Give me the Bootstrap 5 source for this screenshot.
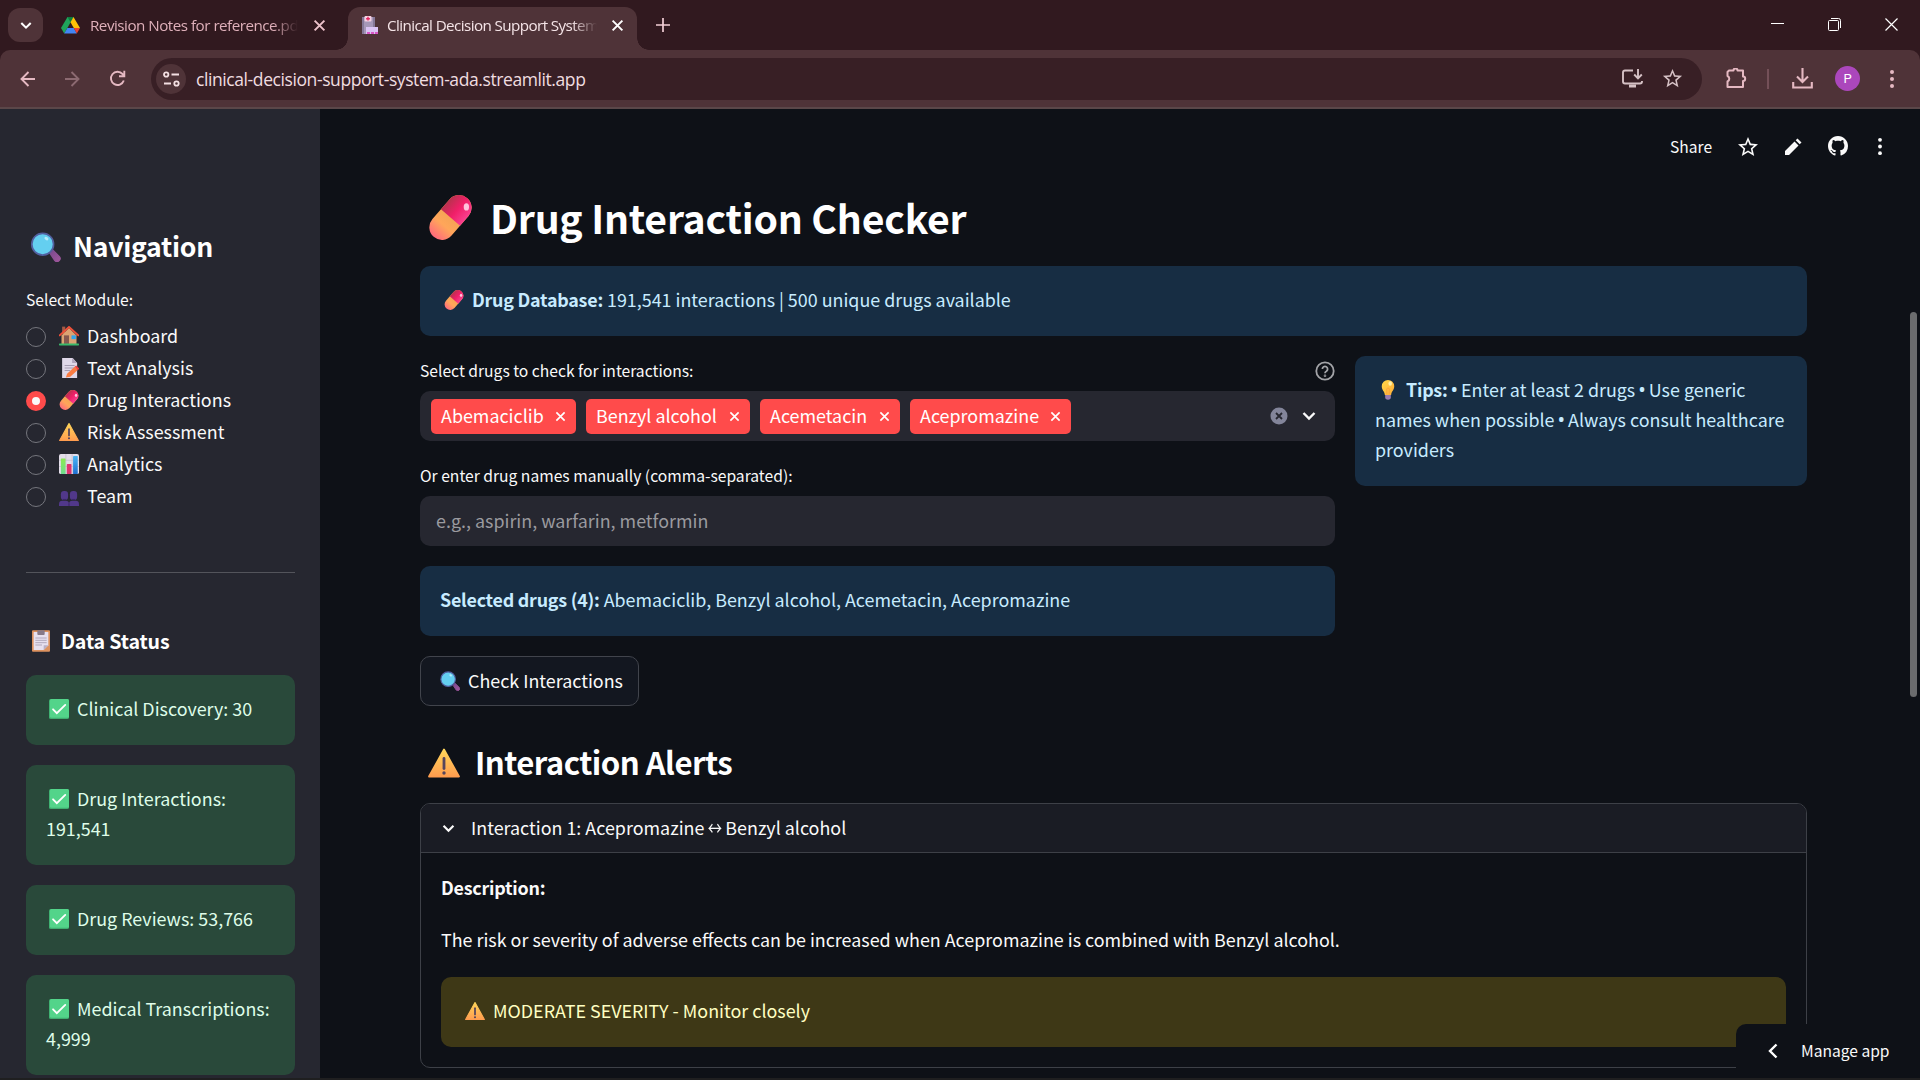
<!DOCTYPE html>
<html lang="en" data-bs-theme="dark">
<head>
<meta charset="utf-8">
<title>Clinical Decision Support System</title>
<link href="https://cdn.jsdelivr.net/npm/bootstrap@5.3.0/dist/css/bootstrap.min.css" rel="stylesheet">
<style>
body{height:1080px;overflow:hidden;background:#0e1117;color:#fafafa;font-family:"Noto Sans CJK SC","Noto Sans",sans-serif;font-size:17.9px;line-height:30px}
svg{display:block;flex:none}
b{letter-spacing:-.24px}
svg.emo{display:inline-block;width:20px;height:20px;vertical-align:-3px;margin:0 8px 0 3px}
.win{font-family:"Open Sans","Noto Sans",sans-serif}
.tabstrip{height:50px;background:#31191f}
.tabsearch{width:35px;height:34px;border-radius:12px;background:#4f3338;margin:8px 0 0 8px}
.tab-idle{width:279px;margin-left:18px}
.tab-live{width:289px;height:43px;margin:7px 0 0 8px;padding-bottom:7px;background:#4f3338;border-radius:12px 12px 0 0;position:relative}
.tab-live::before,.tab-live::after{content:"";position:absolute;bottom:0;width:12px;height:12px}
.tab-live::before{left:-12px;background:radial-gradient(circle at 0 0,transparent 11.5px,#4f3338 12px)}
.tab-live::after{right:-12px;background:radial-gradient(circle at 100% 0,transparent 11.5px,#4f3338 12px)}
.tab-txt{font-size:15.2px;line-height:24px;letter-spacing:-.5px;white-space:nowrap;overflow:hidden;-webkit-mask-image:linear-gradient(90deg,#000 88%,transparent)}
.toolbar{height:59px;background:#4f3338;border-bottom:2px solid #5b4749;border-radius:10px 10px 0 0;color:#e5b9c2}
.omni{width:1551px;height:42px;border-radius:21px;background:#381f25;color:#d5c1c5}
.site{width:30px;height:30px;border-radius:50%;background:#4f3338}
.url{font-size:17.5px;color:#f0dde0;letter-spacing:-.41px}
.avatar{width:25px;height:25px;border-radius:50%;background:#ab47bc;color:#fff;font:13px/25px Roboto,sans-serif;text-align:center}
.viewport{height:969px;overflow:hidden;position:relative}
.side{width:320px;height:969px;background:#262730;padding:119px 25px 0 26px}
.side h2{font-size:26.6px;line-height:36px;font-weight:700;letter-spacing:-.25px;margin:0}
.side h3{font-size:19.6px;line-height:24px;font-weight:700;letter-spacing:-.15px;margin:0}
.lbl{font-size:15.65px;line-height:24px}
.opt{height:32px}
.opt-txt{margin-top:-5px}
.dot{width:20px;height:20px;border-radius:50%;border:1px solid #75767d;margin-right:10px}
.dot.on{border:6.5px solid #ff4b4b;background:#fafafa}
.rule{border-top:1px solid #53545b;width:269px}
.note{border-radius:10px;padding:18px 20px 22px}
.ok{background:#29493a;color:#dffde9}
.info{background:#172d43;color:#c7ebff}
.warn{background:#3e3816;color:#ffffc2}
.main{width:1387px;margin-left:100px;padding-top:83px}
.main h1{font-size:39.2px;line-height:50px;font-weight:700;letter-spacing:-.22px;margin:0}
.main h2{font-size:31.2px;line-height:44px;font-weight:700;letter-spacing:-.55px;margin:0}
.field{height:50px;border-radius:10px;background:#262730}
.tagx{height:35px;border-radius:5px;background:#ff4b4b;color:#fff;padding:0 10px}
.tagx span{margin-top:-2px}
.ph{color:#9a9a9f}
.bul{font-family:"Noto Sans",sans-serif;font-size:20px;line-height:1;margin:0 -1px}
.arrow{display:inline-block;margin:0 -2.5px;transform:scaleX(.8)}
.btn-check2{width:219px;height:50px;border:1px solid #41444c;border-radius:10px;background:#131720;color:#fafafa;font-size:17.9px;line-height:30px;padding:0 0 3px 16px}
.expander{height:265px;border:1px solid #3d4047;border-radius:10px;overflow:hidden}
.exp-head{height:49px;background:#1a1c24;border-bottom:1px solid #3d4047}
.apptools{position:absolute;top:26px;left:1670px;width:230px;height:24px;font-size:15.6px}
.manage{position:absolute;left:1736px;top:915px;width:184px;height:54px;background:#0e1117;border-radius:10px 0 0 0;font-size:15.6px}
.thumb{position:absolute;left:1910px;top:203px;width:7px;height:385px;border-radius:4px;background:#6b6c6e}
.base{height:2px;background:#1f1f20}
</style>
<script src="https://cdn.jsdelivr.net/npm/bootstrap@5.3.0/dist/js/bootstrap.bundle.min.js"></script>
</head>
<body>
<svg width="0" height="0" class="position-absolute">
<defs>
<linearGradient id="gp" x1="0" y1="0" x2="1" y2="0"><stop offset="0" stop-color="#b8324e"/><stop offset=".5" stop-color="#f01f68"/><stop offset="1" stop-color="#f9408f"/></linearGradient>
<linearGradient id="go" x1="0" y1="0" x2="0" y2="1"><stop offset="0" stop-color="#e0a04a"/><stop offset=".7" stop-color="#ffa65a"/><stop offset="1" stop-color="#ff6a7c"/></linearGradient>
<linearGradient id="gw" x1="0" y1="0" x2="0" y2="1"><stop offset="0" stop-color="#ffd65a"/><stop offset="1" stop-color="#ff9d4f"/></linearGradient>
<linearGradient id="gh" x1="0" y1="0" x2="1" y2="1"><stop offset="0" stop-color="#7a4a8e"/><stop offset="1" stop-color="#a0579c"/></linearGradient>
<linearGradient id="gg" x1="0" y1="0" x2="0" y2="1"><stop offset="0" stop-color="#8bea4f"/><stop offset="1" stop-color="#6fdc90"/></linearGradient>
<linearGradient id="gb" x1="0" y1="0" x2="0" y2="1"><stop offset="0" stop-color="#4ab6f5"/><stop offset="1" stop-color="#1f6fd0"/></linearGradient>
<linearGradient id="gl" x1="0" y1="0" x2="1" y2="1"><stop offset="0" stop-color="#ffd849"/><stop offset="1" stop-color="#ffac38"/></linearGradient>
</defs>
<symbol id="pill" viewBox="0 0 32 32"><g transform="rotate(41 16 16)"><rect x="7" y="-2.200" width="18" height="36.400" rx="9" fill="url(#go)"/><path d="M7 16V6.800a9 9 0 0 1 18 0V16z" fill="url(#gp)"/></g><ellipse cx="27.300" cy="8.500" rx="1.900" ry="2.600" fill="#ffc4dd"/></symbol>
<symbol id="lens" viewBox="0 0 32 32"><path d="M21 23l3-3.500 6.500 6.500a3 3 0 0 1-4.500 4.500z" fill="url(#gh)" stroke="url(#gh)" stroke-width="1.500"/><circle cx="13" cy="13" r="11.600" fill="#64cff0" stroke="#5260a0" stroke-width="1.800"/><ellipse cx="17" cy="7" rx="2.300" ry="1.600" transform="rotate(35 17 7)" fill="#b5ecfa"/></symbol>
<symbol id="alert" viewBox="0 0 32 32"><path d="M16 2.500L31 29.500H1z" fill="url(#gw)" stroke="url(#gw)" stroke-width="1.800" stroke-linejoin="round"/><path d="M16 11.500v10" stroke="#56455c" stroke-width="2.800" stroke-linecap="round"/><circle cx="16" cy="26" r="1.700" fill="#56455c"/></symbol>
<symbol id="tick" viewBox="0 0 32 32"><rect width="32" height="32" rx="3" fill="#3fae70"/><rect x="1.500" width="30.500" height="30" rx="2.500" fill="#53d48a"/><path d="M6.500 16.500l6 6L26 9.500" fill="none" stroke="#fff" stroke-width="3" stroke-linecap="round"/></symbol>
<symbol id="house" viewBox="0 0 32 32"><rect x="5" y="1" width="5" height="12" fill="#a85a45"/><path d="M4 15L16 3l12 12v14H4z" fill="#dba372"/><rect x="8" y="15" width="8" height="14" fill="#85584e"/><rect x="20" y="15" width="7" height="6" fill="#31a5ee"/><path d="M1 15L16 1.500 31 15" fill="none" stroke="#ee5038" stroke-width="3" stroke-linecap="round"/><rect y="28" width="32" height="3" rx="1" fill="#39b96b"/></symbol>
<symbol id="memo" viewBox="0 0 32 32"><path d="M5 0h17l7 8v24H5z" fill="#dfd8e8"/><path d="M21 0l8 8h-8z" fill="#b0a5bc"/><path d="M9 12h16M9 16h15M9 20h9" stroke="#9c94aa" stroke-width="1.400"/><path d="M11 31l2-6L25 14l5 5-12 11z" fill="#fa7c42"/><path d="M25 14l2.500-2 5 5-2.500 2.400z" fill="#f0413f"/></symbol>
<symbol id="chart" viewBox="0 0 32 32"><rect width="32" height="32" rx="3" fill="#e3dde9"/><path d="M0 10h32M0 20h32M11 0v32M21 0v32" stroke="#bfb6ca" stroke-width="1"/><rect x="3" y="7" width="7.500" height="25" rx="1" fill="url(#gg)"/><rect x="12.500" y="16" width="7.500" height="16" rx="1" fill="#e0336f"/><rect x="22.500" y="3" width="7.500" height="29" rx="1" fill="url(#gb)"/></symbol>
<symbol id="team" viewBox="0 0 32 32"><g fill="#51388a"><rect x="3" y="8" width="11.500" height="14.500" rx="5"/><path d="M0 32v-3c0-4 2-5.500 5-5.500h6c3 0 5 1.500 5 5.500v3z"/><rect x="17.500" y="8" width="11.500" height="14.500" rx="5"/><path d="M16 32v-3c0-4 2-5.500 5-5.500h6c3 0 5 1.500 5 5.500v3z"/></g><path d="M16 32v-4M6 21.500h6M20 21.500h6" stroke="#382361" stroke-width="1.500"/></symbol>
<symbol id="clip" viewBox="0 0 27 32"><rect width="27" height="32" rx="1.500" fill="#dd925f"/><path d="M2.500 2.500h22v20l-7 7h-15z" fill="#e7e0ef"/><path d="M17.500 29.500l7-7h-7z" fill="#b9afc5"/><rect x="8" width="11" height="7" rx="1.500" fill="#877988"/><path d="M5 11.500h17M5 15h17M5 18.500h17M5 22h10" stroke="#a49bb0" stroke-width="1.200"/></symbol>
<symbol id="bulb" viewBox="0 0 22 32"><path d="M6.500 22h9v7q-4.500 5-9 0z" fill="#9a7bb0"/><path d="M11 0a10 10 0 0 1 10 10c0 6-4.500 8-5 14H6C5.500 18 1 16 1 10A10 10 0 0 1 11 0z" fill="url(#gl)"/><ellipse cx="14.500" cy="5.500" rx="2.800" ry="3.500" fill="#fff0a8"/><path d="M9 23v-9q2-3 4 0v9" stroke="#fb933a" fill="none"/></symbol>
<symbol id="cross" viewBox="0 0 12 12"><path d="M1.500 1.500l9 9m0-9l-9 9" stroke="currentColor" stroke-width="1.800" fill="none"/></symbol>
<symbol id="down" viewBox="0 0 14 10"><path d="M1.500 2L7 7.500 12.500 2" stroke="currentColor" stroke-width="2.400" fill="none"/></symbol>
<symbol id="star" viewBox="0 0 24 24"><path fill="currentColor" d="M22 9.240l-7.190-.62L12 2 9.190 8.630 2 9.240l5.460 4.730L5.820 21 12 17.270 18.180 21l-1.630-7.030zM12 15.400l-3.760 2.270 1-4.280-3.320-2.880 4.380-.38L12 6.100l1.710 4.040 4.380.38-3.320 2.880 1 4.280z"/></symbol>
<symbol id="dots" viewBox="0 0 6 20"><g fill="currentColor"><circle cx="3" cy="3" r="2"/><circle cx="3" cy="10" r="2"/><circle cx="3" cy="17" r="2"/></g></symbol>
</svg>

<header class="win">
  <div class="tabstrip d-flex align-items-start">
    <div class="tabsearch d-flex align-items-center justify-content-center"><svg width="12" height="9" color="#fff"><use href="#down"/></svg></div>
    <div class="tab-idle d-flex align-items-center h-100">
      <svg width="19" height="17" viewBox="0 0 19 17"><path d="M6.500 0h6L9.500 5.500 3.200 16.500 0 11z" fill="#1fa45b"/><path d="M6.500 0h6l-3 5.200z" fill="#0b7d3e"/><path d="M12.500 0L19 11h-6.200L9.500 5.200z" fill="#ffc107"/><path d="M3.200 16.500L6.400 11h6.400l3 5.500z" fill="#4285f4"/><path d="M12.800 11H19l-3.200 5.500z" fill="#ea4335"/></svg>
      <div class="tab-txt" style="width:208px;margin-left:10px;color:#dfb0ba">Revision Notes for reference.pd</div>
      <svg style="margin-left:15px" width="13" height="13" color="#ecc2ca"><use href="#cross"/></svg>
    </div>
    <div class="tab-live d-flex align-items-center">
      <svg style="margin-left:14px" width="16" height="18" viewBox="0 0 16 18"><path d="M0 1h13v10h3v7H0z" fill="#857898"/><rect x="2" y="1" width="9" height="17" fill="#a597b8"/><rect x="2.500" width="7" height="5.500" rx="1" fill="#f6d2e4"/><path d="M6 .8v3.800M4.100 2.700h3.800" stroke="#e22862" stroke-width="1.400"/><rect x="4" y="11" width="12" height="7" fill="#dbc4f5"/><path d="M5 17h11" stroke="#d831b4" stroke-width="1.600" stroke-dasharray="3 1"/></svg>
      <div class="tab-txt" style="width:210px;margin-left:9px;color:#f5e4e7;letter-spacing:-.58px">Clinical Decision Support System</div>
      <svg style="margin-left:14px" width="13" height="13" color="#fff"><use href="#cross"/></svg>
    </div>
    <svg style="margin:18px 0 0 19px" width="14" height="14" viewBox="0 0 14 14"><path d="M7 0v14M0 7h14" stroke="#f3cfd6" stroke-width="1.700"/></svg>
    <div class="ms-auto d-flex align-items-center" style="margin:18px 22px 0 0;gap:44px">
      <svg width="13" height="13" viewBox="0 0 13 13"><path d="M0 5.500h13" stroke="#fff" stroke-width="1"/></svg>
      <svg width="13" height="13" viewBox="0 0 13 13" fill="none" stroke="#fff"><rect x=".5" y="2.500" width="10" height="10" rx="1"/><path d="M3 .5h7.500q2 0 2 2V10"/></svg>
      <svg width="13" height="13" viewBox="0 0 13 13"><path d="M.5.5l12 12m0-12l-12 12" stroke="#fff" stroke-width="1.200"/></svg>
    </div>
  </div>
  <div style="background:#31191f">
  <div class="toolbar d-flex align-items-center">
    <svg style="margin-left:20px" width="15" height="16" viewBox="0 0 15 16" fill="none" stroke="currentColor" stroke-width="1.900"><path d="M15 8H1.500M8.500 1l-7 7 7 7"/></svg>
    <svg style="margin-left:30px" width="15" height="16" viewBox="0 0 15 16" fill="none" stroke="#8c6a71" stroke-width="1.900"><path d="M0 8h13.500M6.500 1l7 7-7 7"/></svg>
    <svg style="margin-left:29px" width="17" height="17" viewBox="0 0 17 17" fill="none" stroke="currentColor" stroke-width="1.900"><path d="M14.800 10.500A6.600 6.600 0 1 1 13.500 4l1.500 1.800M15.300.8v5.400H10"/></svg>
    <div class="omni d-flex align-items-center" style="margin-left:25px">
      <div class="site d-flex align-items-center justify-content-center" style="margin-left:5px"><svg width="17" height="16" viewBox="0 0 17 16" fill="none" stroke="#f3dfe2" stroke-width="1.800"><circle cx="3.200" cy="3.500" r="2.200"/><path d="M8.500 3.500H16M1 12.500h7"/><circle cx="13.500" cy="12.500" r="2.200"/></svg></div>
      <div class="url" style="margin-left:10px">clinical-decision-support-system-ada.streamlit.app</div>
      <svg class="ms-auto" width="21" height="19" viewBox="0 0 21 19" fill="none" stroke="currentColor" stroke-width="1.900"><path d="M11 1.500H3Q1 1.500 1 3.500v9q0 2 2 2h15q2 0 2-2V12"/><path d="M7 17h7" stroke-width="3"/><path d="M16 0v9M12.200 5.500L16 9.300l3.800-3.800"/></svg>
      <svg style="margin:0 18px 0 18px" width="23" height="23"><use href="#star"/></svg>
    </div>
    <svg style="margin-left:24px" width="21" height="21" viewBox="0 0 21 21" fill="none" stroke="currentColor" stroke-width="2"><path d="M3 2.500h4.500a2 2 0 0 1 4 0H17V8.500a2.200 2.200 0 0 1 0 4.400V19H1.500v-5.500a3 3 0 0 0 0-5.500V4z" stroke-linejoin="round"/></svg>
    <div style="width:2px;height:20px;background:#745058;margin-left:20px"></div>
    <svg style="margin-left:23px" width="21" height="21" viewBox="0 0 21 21" fill="none" stroke="currentColor" stroke-width="2.100"><path d="M10.500 0v13.500M5 8.500l5.500 5.500L16 8.500M1.200 14v5.500h18.600V14"/></svg>
    <div class="avatar" style="margin-left:22px">P</div>
    <svg style="margin-left:29px" width="6" height="20"><use href="#dots"/></svg>
  </div>
  </div>
</header>

<div class="viewport d-flex">
  <aside class="side flex-shrink-0">
    <h2 class="d-flex align-items-center"><svg width="31" height="30" style="margin:1px 12px 0 4px"><use href="#lens"/></svg>Navigation</h2>
    <div class="lbl" style="margin:24px 0 10px">Select Module:</div>
    <div class="opt d-flex align-items-center" style="margin-top:-1px"><span class="dot"></span><span class="opt-txt"><svg class="emo"><use href="#house"/></svg>Dashboard</span></div>
    <div class="opt d-flex align-items-center"><span class="dot"></span><span class="opt-txt"><svg class="emo"><use href="#memo"/></svg>Text Analysis</span></div>
    <div class="opt d-flex align-items-center"><span class="dot on"></span><span class="opt-txt"><svg class="emo"><use href="#pill"/></svg>Drug Interactions</span></div>
    <div class="opt d-flex align-items-center"><span class="dot"></span><span class="opt-txt"><svg class="emo"><use href="#alert"/></svg>Risk Assessment</span></div>
    <div class="opt d-flex align-items-center"><span class="dot"></span><span class="opt-txt"><svg class="emo"><use href="#chart"/></svg>Analytics</span></div>
    <div class="opt d-flex align-items-center"><span class="dot"></span><span class="opt-txt"><svg class="emo"><use href="#team"/></svg>Team</span></div>
    <div class="rule" style="margin:59px 0 56px"></div>
    <h3 class="d-flex align-items-center"><svg width="18" height="22" style="margin:0 11px 0 6px"><use href="#clip"/></svg>Data Status</h3>
    <div class="d-flex flex-column" style="gap:20px;margin-top:22px">
      <div class="note ok"><svg class="emo"><use href="#tick"/></svg>Clinical Discovery: 30</div>
      <div class="note ok"><svg class="emo"><use href="#tick"/></svg>Drug Interactions:<br>191,541</div>
      <div class="note ok"><svg class="emo"><use href="#tick"/></svg>Drug Reviews: 53,766</div>
      <div class="note ok text-nowrap"><svg class="emo"><use href="#tick"/></svg>Medical Transcriptions:<br>4,999</div>
    </div>
  </aside>

  <main class="main flex-shrink-0">
    <h1 class="d-flex align-items-center"><svg width="45" height="45" style="margin:1px 17px 0 8px"><use href="#pill"/></svg>Drug Interaction Checker</h1>
    <div class="note info" style="margin-top:24px"><svg class="emo" style="margin-left:4px"><use href="#pill"/></svg><b>Drug Database:</b> 191,541 interactions | 500 unique drugs available</div>
    <div class="d-flex align-items-start" style="gap:20px;margin-top:20px">
      <section style="width:915px">
        <div class="lbl d-flex align-items-center justify-content-between" style="padding-top:3px"><span>Select drugs to check for interactions:</span>
          <svg width="20" height="20" viewBox="0 0 20 20" fill="none" stroke="#a3a4a8" stroke-width="1.800"><circle cx="10" cy="10" r="8.700"/><path d="M7.400 8a2.600 2.600 0 1 1 4 2.200Q10 11 10 12.300"/><circle cx="10" cy="14.700" r=".4"/></svg></div>
        <div class="field d-flex align-items-center" style="margin-top:8px;padding:0 19px 0 11px">
          <div class="d-flex" style="gap:10px">
            <span class="tagx d-flex align-items-center justify-content-between" style="width:145px"><span>Abemaciclib</span><svg width="11" height="11"><use href="#cross"/></svg></span>
            <span class="tagx d-flex align-items-center justify-content-between" style="width:164px"><span>Benzyl alcohol</span><svg width="11" height="11"><use href="#cross"/></svg></span>
            <span class="tagx d-flex align-items-center justify-content-between" style="width:140px"><span>Acemetacin</span><svg width="11" height="11"><use href="#cross"/></svg></span>
            <span class="tagx d-flex align-items-center justify-content-between" style="width:161px"><span>Acepromazine</span><svg width="11" height="11"><use href="#cross"/></svg></span>
          </div>
          <svg class="ms-auto" width="18" height="18" viewBox="0 0 18 18"><circle cx="9" cy="9" r="8.500" fill="#83859a"/><path d="M6 6l6 6m0-6l-6 6" stroke="#262730" stroke-width="1.800"/></svg>
          <svg style="margin-left:14px" width="14" height="10"><use href="#down"/></svg>
        </div>
        <div class="lbl" style="margin:23px 0 8px">Or enter drug names manually (comma-separated):</div>
        <div class="field ph d-flex align-items-center" style="padding:0 16px 3px">e.g., aspirin, warfarin, metformin</div>
        <div class="note info" style="margin-top:20px"><b>Selected drugs (4):</b> Abemaciclib, Benzyl alcohol, Acemetacin, Acepromazine</div>
        <button class="btn btn-check2 text-start d-block text-nowrap" style="margin-top:20px"><svg class="emo"><use href="#lens"/></svg>Check Interactions</button>
      </section>
      <div class="note info text-nowrap" style="width:452px"><svg class="emo" style="width:14px;margin:0 11px 0 6px"><use href="#bulb"/></svg><b>Tips:</b> <span class="bul">•</span> Enter at least 2 drugs <span class="bul">•</span> Use generic<br>names when possible <span class="bul">•</span> Always consult healthcare<br>providers</div>
    </div>
    <h2 class="d-flex align-items-center" style="margin-top:34px"><svg width="36" height="32" preserveAspectRatio="none" style="margin:2px 13px 0 6px"><use href="#alert"/></svg>Interaction Alerts</h2>
    <div class="expander" style="margin-top:19px">
      <div class="exp-head d-flex align-items-center" style="padding-left:21px"><svg width="13" height="9" style="margin-right:16px"><use href="#down"/></svg><span style="margin-top:-2px">Interaction 1: Acepromazine <span class="arrow">↔</span> Benzyl alcohol</span></div>
      <div style="padding:19px 20px 20px">
        <div><b>Description:</b></div>
        <div style="margin-top:22px">The risk or severity of adverse effects can be increased when Acepromazine is combined with Benzyl alcohol.</div>
        <div class="note warn" style="margin-top:23px"><svg class="emo" style="margin-left:4px"><use href="#alert"/></svg>MODERATE SEVERITY - Monitor closely</div>
      </div>
    </div>
  </main>

  <div class="apptools d-flex align-items-center">
    <span style="width:43px;margin-top:-2px">Share</span>
    <svg style="margin-left:23px" width="24" height="24"><use href="#star"/></svg>
    <svg style="margin-left:24px" width="18" height="18" viewBox="0 0 18 18" fill="currentColor"><path d="M1 17v-4L10.500 3.500l4 4L5 17zM11.700 2.300L13.500.6l4 4-1.800 1.700z"/></svg>
    <svg style="margin:-2px 0 0 26px" width="20" height="20" viewBox="0 0 16 16" fill="currentColor"><path d="M8 0C3.580 0 0 3.580 0 8c0 3.540 2.290 6.530 5.470 7.590.4.070.55-.17.55-.38 0-.19-.01-.82-.01-1.490-2.010.37-2.530-.49-2.690-.94-.09-.23-.48-.94-.82-1.130-.28-.15-.68-.52-.01-.53.63-.01 1.080.58 1.230.82.72 1.210 1.870.87 2.330.66.070-.52.280-.87.510-1.070-1.780-.2-3.640-.89-3.640-3.950 0-.87.310-1.590.820-2.150-.08-.2-.36-1.020.08-2.120 0 0 .67-.21 2.200.82.640-.18 1.320-.27 2-.27s1.360.09 2 .27c1.530-1.040 2.200-.82 2.200-.82.440 1.100.160 1.920.080 2.120.510.560.820 1.270.820 2.150 0 3.070-1.870 3.750-3.650 3.950.290.250.540.730.540 1.480 0 1.070-.01 1.930-.01 2.200 0 .210.150.460.550.380A8.010 8.010 0 0 0 16 8c0-4.420-3.580-8-8-8z"/></svg>
    <svg style="margin:-2px 0 0 29px" width="6" height="19"><use href="#dots"/></svg>
  </div>
  <div class="thumb"></div>
  <div class="manage d-flex align-items-center"><svg style="margin:0 23px 0 32px" width="10" height="16" viewBox="0 0 10 16"><path d="M8.500 1.500L2 8l6.500 6.500" fill="none" stroke="#fff" stroke-width="2.400"/></svg><span style="margin-top:-2px">Manage app</span></div>
</div>
<div class="base position-relative"></div>
</body>
</html>
